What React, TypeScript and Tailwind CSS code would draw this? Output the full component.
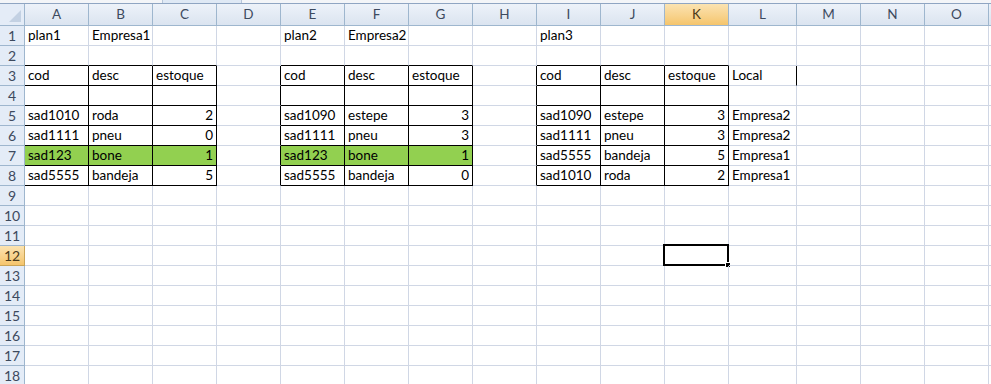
import React from "react";

// Planilha com três tabelas de estoque (plan1, plan2, plan3)
const COLS = ["A", "B", "C", "D", "E", "F", "G", "H", "I", "J", "K", "L", "M", "N", "O", ""];
const ROWS = Array.from({ length: 18 }, (_, i) => i + 1);

type Cell = { v: string; num?: boolean };

const dados: Record<number, Record<number, Cell>> = {
  1: { 0: { v: "plan1" }, 1: { v: "Empresa1" }, 4: { v: "plan2" }, 5: { v: "Empresa2" }, 8: { v: "plan3" } },
  3: {
    0: { v: "cod" }, 1: { v: "desc" }, 2: { v: "estoque" },
    4: { v: "cod" }, 5: { v: "desc" }, 6: { v: "estoque" },
    8: { v: "cod" }, 9: { v: "desc" }, 10: { v: "estoque" }, 11: { v: "Local" },
  },
  5: {
    0: { v: "sad1010" }, 1: { v: "roda" }, 2: { v: "2", num: true },
    4: { v: "sad1090" }, 5: { v: "estepe" }, 6: { v: "3", num: true },
    8: { v: "sad1090" }, 9: { v: "estepe" }, 10: { v: "3", num: true }, 11: { v: "Empresa2" },
  },
  6: {
    0: { v: "sad1111" }, 1: { v: "pneu" }, 2: { v: "0", num: true },
    4: { v: "sad1111" }, 5: { v: "pneu" }, 6: { v: "3", num: true },
    8: { v: "sad1111" }, 9: { v: "pneu" }, 10: { v: "3", num: true }, 11: { v: "Empresa2" },
  },
  7: {
    0: { v: "sad123" }, 1: { v: "bone" }, 2: { v: "1", num: true },
    4: { v: "sad123" }, 5: { v: "bone" }, 6: { v: "1", num: true },
    8: { v: "sad5555" }, 9: { v: "bandeja" }, 10: { v: "5", num: true }, 11: { v: "Empresa1" },
  },
  8: {
    0: { v: "sad5555" }, 1: { v: "bandeja" }, 2: { v: "5", num: true },
    4: { v: "sad5555" }, 5: { v: "bandeja" }, 6: { v: "0", num: true },
    8: { v: "sad1010" }, 9: { v: "roda" }, 10: { v: "2", num: true }, 11: { v: "Empresa1" },
  },
};

// células com borda preta (as três tabelas)
function naTabela(r: number, c: number) {
  if (r < 3 || r > 8) return false;
  return (c >= 0 && c <= 2) || (c >= 4 && c <= 6) || (c >= 8 && c <= 10);
}

const verde = (r: number, c: number) => r === 7 && ((c >= 0 && c <= 2) || (c >= 4 && c <= 6));

const SEL_ROW = 12;
const SEL_COL = 10;

function Canto() {
  return (
    <div className="h-full flex items-end justify-end p-[3px] border-r border-b border-[#9eb6ce] bg-[#e4ecf7]">
      <svg width="12" height="12" viewBox="0 0 12 12">
        <polygon points="12,0 12,12 0,12" fill="#c3d1e3" />
      </svg>
    </div>
  );
}

export default function App() {
  return (
    <div className="w-[991px] h-[384px] overflow-hidden bg-white" style={{ fontFamily: "Lato, 'Liberation Sans', sans-serif" }}>
      {/* faixa da barra de fórmulas */}
      <div className="h-[4px] flex bg-[#f3f5f8] border-b border-[#8fa5c2]">
        <div className="ml-[162px] w-[80px] h-[3px] bg-[#dfe9f5] border-x border-[#b7c6da]" />
      </div>

      <div className="grid grid-cols-[25px_repeat(11,64px)_68px_repeat(4,64px)] grid-rows-[22px_repeat(18,20px)]">
        <Canto />
        {COLS.map((c, i) => (
          <div
            key={i}
            className={
              "flex items-center justify-center border-r border-b border-[#9eb6ce] text-[13.5px] " +
              (i === SEL_COL
                ? "bg-gradient-to-b from-[#fbe3b1] to-[#f5c56c] text-[#4b3a1a]"
                : "bg-gradient-to-b from-[#edf2f9] to-[#dbe4f0] text-[#3d4a5e]")
            }
          >
            {c}
          </div>
        ))}

        {ROWS.map((r) => (
          <React.Fragment key={r}>
            <div
              className={
                "flex items-center justify-center border-r border-b text-[14px] " +
                (r === SEL_ROW
                  ? "bg-gradient-to-b from-[#fbe3b1] to-[#f5c56c] border-[#c9a457] text-[#4b3a1a]"
                  : "bg-[#e4ecf7] border-[#9eb6ce] text-[#3d4a5e]")
              }
            >
              {r}
            </div>
            {COLS.map((_, c) => {
              const cell = dados[r]?.[c];
              const direitaPreta = naTabela(r, c) || naTabela(r, c + 1) || (r === 3 && c === 11);
              const baixoPreto = naTabela(r, c) || naTabela(r + 1, c);
              const sel = r === SEL_ROW && c === SEL_COL;
              return (
                <div
                  key={c}
                  className={
                    "relative flex items-end pb-[1px] px-[3px] border-r border-b whitespace-nowrap text-[13.5px] leading-[18px] text-black " +
                    (direitaPreta ? "border-r-black " : "border-r-[#d0d7e5] ") +
                    (baixoPreto ? "border-b-black " : "border-b-[#d0d7e5] ") +
                    (verde(r, c) ? "bg-[#92d050] " : "") +
                    (cell?.num ? "justify-end" : "justify-start")
                  }
                >
                  {cell?.v}
                  {sel && (
                    <div className="absolute -left-[2px] -top-[2px] -right-[1px] -bottom-[1px] border-[2.5px] border-black">
                      <div className="absolute -right-[4px] -bottom-[4px] w-[6px] h-[6px] bg-black border border-white" />
                    </div>
                  )}
                </div>
              );
            })}
          </React.Fragment>
        ))}
      </div>
    </div>
  );
}
